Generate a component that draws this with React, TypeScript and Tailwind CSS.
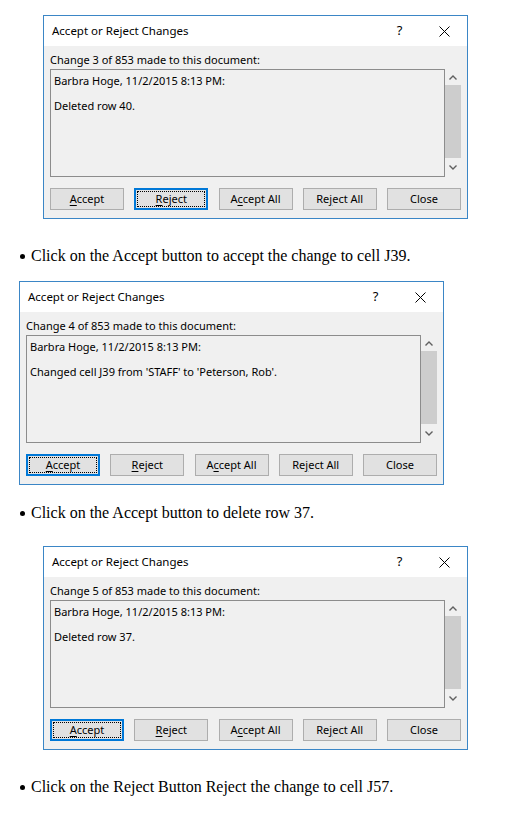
import React from "react";

const ui = { fontFamily: '"Segoe UI", "Noto Sans", sans-serif' };

type Btn = { key: string; label: React.ReactNode };

const buttons: Btn[] = [
  { key: "accept", label: <><u className="underline-offset-2">A</u>ccept</> },
  { key: "reject", label: <><u className="underline-offset-2">R</u>eject</> },
  { key: "acceptAll", label: <>A<u className="underline-offset-2">c</u>cept All</> },
  { key: "rejectAll", label: <>Re<u className="underline-offset-2">j</u>ect All</> },
  { key: "close", label: <>Close</> },
];

function DialogButton({ label, focused }: { label: React.ReactNode; focused: boolean }) {
  if (focused) {
    return (
      <div className="w-[74px] h-[22px] bg-[#e1e1e1] border-2 border-[#0078d7] p-[1px] flex">
        <div className="flex-1 border border-dotted border-black flex items-center justify-center">
          {label}
        </div>
      </div>
    );
  }
  return (
    <div className="w-[74px] h-[22px] bg-[#e1e1e1] border border-[#adadad] flex items-center justify-center">
      {label}
    </div>
  );
}

function ChangesDialog({ num, message, focus }: { num: number; message: string; focus: string }) {
  return (
    <div style={ui} className="w-[425px] h-[204px] border border-[#3b86c6] bg-[#f0f0f0] flex flex-col text-[11px] text-black">
      {/* title bar */}
      <div className="h-[30px] bg-white flex items-center">
        <span className="pl-[8px] flex-1 text-[11.5px]">Accept or Reject Changes</span>
        <span className="w-[45px] text-center text-[13px]">?</span>
        <span className="w-[45px] flex items-center justify-center">
          <svg width="11" height="11" viewBox="0 0 11 11">
            <path d="M0.5 0.5 L10.5 10.5 M10.5 0.5 L0.5 10.5" stroke="#000" strokeWidth="1" fill="none" />
          </svg>
        </span>
      </div>

      <div className="flex flex-col px-[6px] pt-[7px]">
        <div className="leading-[14px]">Change {num} of 853 made to this document:</div>

        {/* message box + scrollbar */}
        <div className="mt-[2px] h-[108px] flex">
          <div className="flex-1 border border-[#8c8c8c] pl-[3px] pt-[5px] leading-[12.5px]">
            <div>Barbra Hoge, 11/2/2015 8:13 PM:</div>
            <div>&nbsp;</div>
            <div>{message}</div>
          </div>
          <div className="w-[16px] flex flex-col">
            <div className="h-[16px] flex items-center justify-center">
              <svg width="8" height="5" viewBox="0 0 8 5">
                <path d="M0.5 4.5 L4 1 L7.5 4.5" stroke="#606060" strokeWidth="1.4" fill="none" />
              </svg>
            </div>
            <div className="h-[73px] bg-[#cdcdcd]" />
            <div className="flex-1 flex items-center justify-center">
              <svg width="8" height="5" viewBox="0 0 8 5">
                <path d="M0.5 0.5 L4 4 L7.5 0.5" stroke="#606060" strokeWidth="1.4" fill="none" />
              </svg>
            </div>
          </div>
        </div>

        <div className="mt-[11px] flex justify-between">
          {buttons.map((b) => (
            <DialogButton key={b.key} label={b.label} focused={b.key === focus} />
          ))}
        </div>
      </div>
    </div>
  );
}

function Bullet({ children, className }: { children: React.ReactNode; className: string }) {
  return (
    <div
      style={{ fontFamily: '"Liberation Serif", "Times New Roman", serif' }}
      className={`pl-[20px] text-[16px] leading-[18px] text-black flex items-center ${className}`}
    >
      <span className="w-[5px] h-[5px] rounded-full bg-black mr-[6px] mt-[1px]" />
      <span>{children}</span>
    </div>
  );
}

export default function App() {
  return (
    <div className="w-[508px] h-[837px] bg-white flex flex-col">
      <div className="mt-[15px] ml-[43px]">
        <ChangesDialog num={3} message="Deleted row 40." focus="reject" />
      </div>
      <Bullet className="mt-[28px]">Click on the Accept button to accept the change to cell J39.</Bullet>

      <div className="mt-[16px] ml-[19px]">
        <ChangesDialog num={4} message="Changed cell J39 from 'STAFF' to 'Peterson, Rob'." focus="accept" />
      </div>
      <Bullet className="mt-[19px]">Click on the Accept button to delete row 37.</Bullet>

      <div className="mt-[24px] ml-[43px]">
        <ChangesDialog num={5} message="Deleted row 37." focus="accept" />
      </div>
      <Bullet className="mt-[28px]">Click on the Reject Button Reject the change to cell J57.</Bullet>
    </div>
  );
}
